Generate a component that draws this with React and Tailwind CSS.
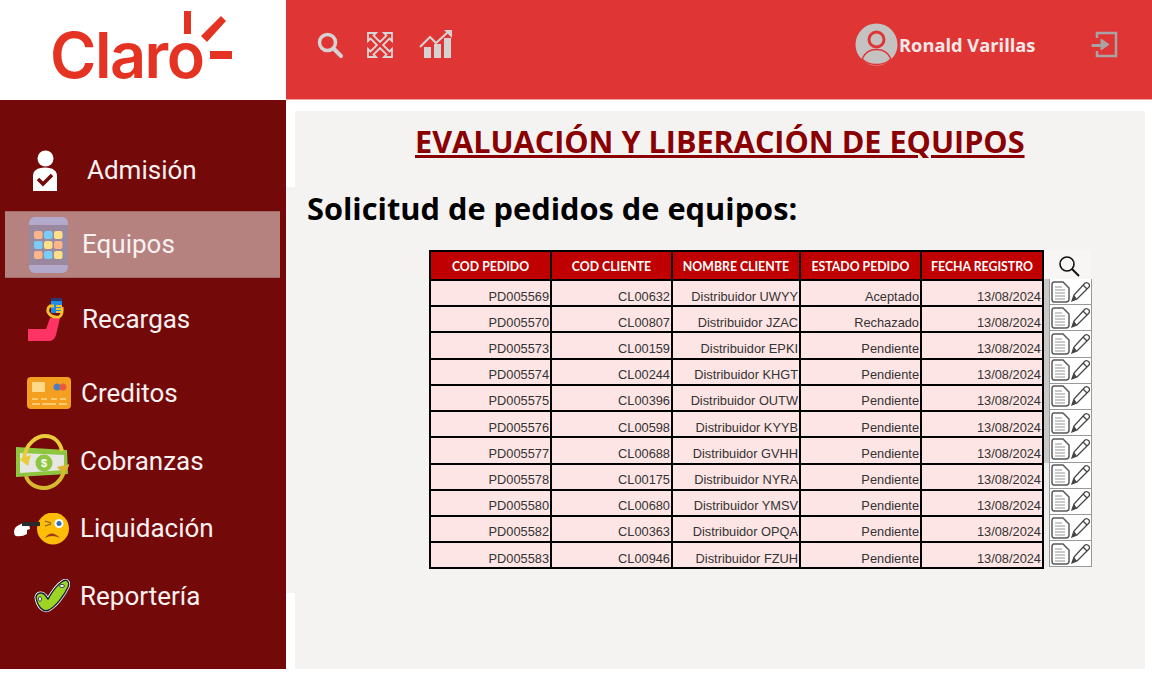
import React from 'react';

const rows = [
  ['PD005569','CL00632','Distribuidor UWYY','Aceptado'],
  ['PD005570','CL00807','Distribuidor JZAC','Rechazado'],
  ['PD005573','CL00159','Distribuidor EPKI','Pendiente'],
  ['PD005574','CL00244','Distribuidor KHGT','Pendiente'],
  ['PD005575','CL00396','Distribuidor OUTW','Pendiente'],
  ['PD005576','CL00598','Distribuidor KYYB','Pendiente'],
  ['PD005577','CL00688','Distribuidor GVHH','Pendiente'],
  ['PD005578','CL00175','Distribuidor NYRA','Pendiente'],
  ['PD005580','CL00680','Distribuidor YMSV','Pendiente'],
  ['PD005582','CL00363','Distribuidor OPQA','Pendiente'],
  ['PD005583','CL00946','Distribuidor FZUH','Pendiente'],
];
const heads = ['COD PEDIDO','COD CLIENTE','NOMBRE CLIENTE','ESTADO PEDIDO','FECHA REGISTRO'];
const widths = ['w-[119px]','w-[121px]','w-[128px]','w-[121px]','w-[122px]'];

const ClaroLogo = () => (
  <div className="relative w-[286px] h-[99px] bg-white shrink-0">
    <span className="absolute left-[50px] top-[20px] text-[#e53323] text-[63px] leading-[70px] font-semibold tracking-[-1.5px] font-['Inter',sans-serif]">Claro</span>
    <svg className="absolute left-0 top-0" width="286" height="99" viewBox="0 0 286 99">
      <rect x="184" y="11" width="7" height="23" fill="#e53323"/>
      <path d="M201 36 L221 16 L226 21 L207 42 Z" fill="#e53323"/>
      <rect x="210" y="51" width="22" height="8" fill="#e53323"/>
    </svg>
  </div>
);

const SearchTop = () => (
  <svg width="28" height="28" viewBox="0 0 28 28" fill="none" stroke="#d4d2d2">
    <circle cx="11.500" cy="11.500" r="8" strokeWidth="3.500"/>
    <path d="M17.500 17.500 L25 25" strokeWidth="4" strokeLinecap="round"/>
  </svg>
);
const Expand = () => (
  <svg width="28" height="28" viewBox="0 0 28 28" fill="none" stroke="#d8d6d6" strokeWidth="1.800">
    <path d="M2 2h8l-2.500 2.500 6.500 6.500 6.500-6.500L18 2h8v8l-2.500-2.500L17 14l6.500 6.500L26 18v8h-8l2.500-2.500L14 17l-6.500 6.500L10 26H2v-8l2.500 2.500L11 14 4.500 7.500 2 10z"/>
  </svg>
);
const ChartUp = () => (
  <svg width="34" height="30" viewBox="0 0 34 30">
    <path d="M1 17 L11 7 L17 13 L29 2" fill="none" stroke="#d4d2d2" strokeWidth="2"/>
    <path d="M25 0 H33 V8 Z" fill="#d4d2d2" />
    <rect x="5" y="17" width="7" height="11" fill="#d4d2d2"/>
    <rect x="15" y="14" width="7" height="14" fill="#d4d2d2"/>
    <rect x="25" y="8" width="7" height="20" fill="#d4d2d2"/>
  </svg>
);
const Avatar = () => (
  <svg width="43" height="43" viewBox="0 0 43 43">
    <circle cx="21.500" cy="21.500" r="21" fill="#c5c2c2"/>
    <circle cx="21.500" cy="16.500" r="7.500" fill="none" stroke="#e03535" strokeWidth="3"/>
    <path d="M7 36 C10 29 15 26.500 21.500 26.500 C28 26.500 33 29 36 36 C32 40 27 41.500 21.500 41.500 C16 41.500 11 40 7 36Z" fill="none" stroke="#e03535" strokeWidth="1.500"/>
  </svg>
);
const Logout = () => (
  <svg width="28" height="28" viewBox="0 0 28 28" fill="none">
    <path d="M6 7 V2 H25 V25 H6 V20" stroke="#a9a3a3" strokeWidth="2.500"/>
    <path d="M1 13.500 H10 V8 L18 13.500 L10 19 V15.500 H1 Z" fill="#a9a3a3" stroke="#a9a3a3" strokeWidth="1"/>
  </svg>
);

const IconPerson = () => (
  <svg width="26" height="42" viewBox="0 0 26 42">
    <circle cx="13.500" cy="8.500" r="8" fill="#fff"/>
    <path d="M1 41 V26 C1 21 5 17.500 13 17.500 C21 17.500 25 21 25 26 V41 Z" fill="#fff"/>
    <path d="M6 29 L11 34 L20 25" fill="none" stroke="#740909" strokeWidth="3.500"/>
  </svg>
);
const IconPhone = () => {
  const c = ['#fdb58a','#7acdf5','#fde08a','#7acdf5','#fde08a','#fdb58a','#fdb58a','#7acdf5','#fde08a'];
  return (
    <svg width="39" height="56" viewBox="0 0 39 56">
      <rect x="0" y="0" width="39" height="56" rx="6" fill="#b3aacb"/>
      <rect x="0" y="8" width="39" height="40" fill="#99889e"/>
      {c.map((f, i) => (
        <rect key={i} x={5 + (i % 3) * 10} y={14 + Math.floor(i / 3) * 10} width="8.500" height="8" rx="2" fill={f}/>
      ))}
    </svg>
  );
};
const IconArm = () => (
  <svg width="36" height="44" viewBox="0 0 36 44">
    <path d="M0 31 H18 L22 20 H32 L28 37 Q26 43 21 43 H0 Z" fill="#ff3364"/>
    <rect x="23" y="0" width="11" height="15" rx="1" fill="#1d8be8"/>
    <rect x="23" y="0" width="11" height="3" fill="#283a6e"/>
    <path d="M26 8 H22 Q19 10 20 14 Q23 20 31 19 Q35 17 34 9" fill="none" stroke="#f4c12c" strokeWidth="2.800"/>
    <path d="M28 8h6M28 11h6M28 14h6" stroke="#f4c12c" strokeWidth="1.800"/>
  </svg>
);
const IconCard = () => (
  <svg width="45" height="33" viewBox="0 0 45 33">
    <rect x="0" y="0" width="44" height="32" rx="4" fill="#f59f21"/>
    <rect x="5" y="5" width="13" height="10" rx="1" fill="#ffd98a"/>
    <circle cx="30" cy="10" r="3.500" fill="#4a7fc0"/>
    <circle cx="36" cy="10" r="3.500" fill="#ea5a3a"/>
    <path d="M5 22h6M14 22h6M24 22h6M33 22h6M5 27h8M15 27h14M32 27h8" stroke="#ffd98a" strokeWidth="1.600"/>
  </svg>
);
const IconMoney = () => (
  <svg width="54" height="56" viewBox="0 0 54 56">
    <path d="M1 13 L52 16 L53 40 L1 43 Z" fill="#8ec63f"/>
    <path d="M5 19 L49 21 L49 36 L5 39 Z" fill="#e6e6e2"/>
    <circle cx="29" cy="29" r="8.500" fill="#8ec63f"/>
    <text x="29" y="33" textAnchor="middle" fontSize="11" fontWeight="700" fill="#fff" fontFamily="Liberation Sans">$</text>
    <path d="M9 24 C11 9 22 2 30 2 C39 2 45 8 47 17" fill="none" stroke="#e8cc3c" strokeWidth="4"/>
    <path d="M50 33 C48 47 38 54 29 54 C20 54 13 49 11 42" fill="none" stroke="#d8b730" strokeWidth="4"/>
    <path d="M4 25 L16 21 L13 32 Z" fill="#e8cc3c"/>
    <path d="M42 33 L55 30 L49 41 Z" fill="#d8b730"/>
  </svg>
);
const IconWorried = () => (
  <svg width="58" height="32" viewBox="0 0 58 32">
    <circle cx="40" cy="15.500" r="16" fill="#fdbd08"/>
    <path d="M1 19 Q1 14 6 12 L10 10 L16 11 L17 16 L14 17 L14 21 Q9 24 3 23 Q1 22 1 19Z" fill="#fff"/>
    <rect x="9" y="9" width="18" height="4" fill="#2b2b2b"/>
    <circle cx="46" cy="10.500" r="4.500" fill="#fff"/>
    <circle cx="46" cy="10.500" r="2.500" fill="#2b6fb5"/>
    <path d="M32 8 L38 10 M32 13 L38 11" stroke="#805a10" strokeWidth="1.200"/>
    <path d="M32 25 Q38 16 47 25 Q39 21 32 25Z" fill="#a33a1a"/>
  </svg>
);
const IconCheck = () => (
  <svg width="36" height="35" viewBox="0 0 36 35">
    <path d="M2 18 C3 13 9 13 11 16 L14 20 C18 13 24 5 29 2 C33 0 36 3 34 8 C30 17 22 27 15 31 C9 34 3 27 2 18 Z" fill="#9ed524" stroke="#fff" strokeWidth="3"/>
    <path d="M2 18 C3 13 9 13 11 16 L14 20 C18 13 24 5 29 2 C33 0 36 3 34 8 C30 17 22 27 15 31 C9 34 3 27 2 18 Z" fill="#9ed524" stroke="#10203a" strokeWidth="1.400"/>
    <ellipse cx="6" cy="20" rx="1.500" ry="2.300" fill="#fff" stroke="#10203a" strokeWidth="0.800"/>
    <ellipse cx="28" cy="7" rx="2.500" ry="1.500" fill="#fff" stroke="#10203a" strokeWidth="0.800"/>
  </svg>
);

const nav = [
  { label: 'Admisión', icon: <IconPerson />, iconBox: 'w-[87px] pl-[32px]', mt: '' },
  { label: 'Equipos', icon: <IconPhone />, iconBox: 'w-[77px] pl-[29px]', mt: 'mt-[7px]', active: true },
  { label: 'Recargas', icon: <IconArm />, iconBox: 'w-[82px] pl-[28px]', mt: 'mt-[8px]' },
  { label: 'Creditos', icon: <IconCard />, iconBox: 'w-[81px] pl-[27px]', mt: 'mt-[7px]' },
  { label: 'Cobranzas', icon: <IconMoney />, iconBox: 'w-[80px] pl-[15px]', mt: 'mt-px' },
  { label: 'Liquidación', icon: <IconWorried />, iconBox: 'w-[80px] pl-[13px]', mt: '' },
  { label: 'Reportería', icon: <IconCheck />, iconBox: 'w-[80px] pl-[34px]', mt: 'mt-px' },
];

const DocPencil = () => (
  <svg width="40" height="22" viewBox="0 0 40 22" fill="none">
    <path d="M3 1 H12 L18 7 V18 Q18 21 15 21 H3 Q1 21 1 18 V4 Q1 1 3 1Z" stroke="#5a5a5a" strokeWidth="1.500"/>
    <path d="M4 6h7M4 9h10M4 12h10M4 15h10M4 18h10" stroke="#8a8a8a" strokeWidth="0.900"/>
    <path d="M21 20 L23 14 L34 2 Q36 1 38 3 Q39 5 38 6 L26 18 Z" stroke="#444" strokeWidth="1.300"/>
    <path d="M32 4 L36 8" stroke="#444" strokeWidth="1.300"/>
    <path d="M21 20 L23 14 L26 18 Z" fill="#444"/>
  </svg>
);

export default function App() {
  return (
    <div className="w-[1152px] h-[676px] bg-white overflow-hidden flex flex-col">
      <header className="flex h-[99px] shrink-0">
        <ClaroLogo />
        <div className="flex-1 bg-[#e03535] flex items-center pb-[10px]">
          <div className="ml-[30px] flex items-center"><SearchTop /></div>
          <div className="ml-[22px] flex items-center"><Expand /></div>
          <div className="ml-[25px] flex items-center"><ChartUp /></div>
          <div className="ml-[402px] flex items-center"><Avatar /></div>
          <span className="ml-px text-[18.3px] font-bold text-[#f1e8e8] font-['Open_Sans',sans-serif]">Ronald Varillas</span>
          <div className="ml-[56px] flex items-center"><Logout /></div>
        </div>
      </header>
      <div className="h-px bg-[#f0a0a0] ml-[286px] shrink-0" />
      <div className="flex h-[569px] shrink-0">
        <aside className="w-[286px] bg-[#740909] pt-[37px] shrink-0 flex flex-col">
          {nav.map((n) => (
            <div key={n.label} className={`h-[67px] flex items-center shrink-0 ${n.mt} ${n.active ? 'bg-[#b58280] ml-[5px] mr-[6px] border-y border-[#a76a6a]' : ''}`}>
              <div className={`${n.iconBox} shrink-0 flex items-center ${n.active ? '-ml-[5px]' : ''}`}>{n.icon}</div>
              <span className={`text-[26px] text-[#f8f1f1] font-['Roboto',sans-serif] ${n.active ? 'ml-[5px]' : ''}`}>{n.label}</span>
            </div>
          ))}
        </aside>
        <div className="w-[9px] shrink-0 flex flex-col bg-white">
          <div className="h-[87px] bg-white" />
          <div className="h-[406px] bg-[#f4f3f2]" />
        </div>
        <main className="w-[850px] mt-[11px] bg-[#f4f3f2] flex flex-col shrink-0">
          <h1 className="mt-[10px] pl-[120px] text-[30.600px] leading-[40px] font-bold text-[#8a0000] underline font-['Open_Sans',sans-serif]">EVALUACIÓN Y LIBERACIÓN DE EQUIPOS</h1>
          <h2 className="mt-[26px] pl-[12px] text-[30.750px] leading-[42px] font-bold text-black font-['Open_Sans',sans-serif]">Solicitud de pedidos de equipos:</h2>
          <div className="mt-[21px] ml-[134px] flex">
            <div className="flex flex-col">
              <div className="flex h-[29px] bg-black border-2 border-b-0 border-black">
                {heads.map((h, i) => (
                  <div key={h} className={`${widths[i]} ${i === 0 ? '' : 'border-l-2 border-black'} bg-[#c00000] flex items-center justify-center pt-[3px] text-white text-[12.300px] font-bold font-['Lato',sans-serif]`}>{h}</div>
                ))}
              </div>
              {rows.map((r) => (
                <div key={r[0]} className="flex h-[26.220px] border-2 border-b-0 last:h-[28.220px] last:border-b-2 border-black">
                  {[r[0], r[1], r[2], r[3], '13/08/2024'].map((c, i) => (
                    <div key={i} className={`${widths[i]} ${i === 0 ? '' : 'border-l-2 border-black'} bg-[#fee5e5] flex items-center justify-end pr-px pt-[6px] text-[12.800px] text-[#333] font-['Liberation_Sans',sans-serif]`}>{c}</div>
                  ))}
                </div>
              ))}
            </div>
            <div className="flex flex-col w-[47px]">
              <div className="h-[29px] pl-[2px] pt-[2px] bg-[#f7f6f5] flex items-center justify-center">
                <svg width="24" height="22" viewBox="0 0 24 22" fill="none" stroke="#111">
                  <circle cx="10" cy="9" r="7" strokeWidth="1.600"/>
                  <path d="M15 14 L22 21" strokeWidth="2"/>
                </svg>
              </div>
              {rows.map((r, i) => (
                <div key={r[0]} className="flex h-[26.220px]">
                  <div className={`w-[5px] shrink-0 ${i < 7 ? 'bg-[#c8c8c8]' : 'bg-[#eeeeee]'}`} />
                  <div className="flex-1 bg-white border border-t-0 border-[#999] flex items-center pl-px">
                    <DocPencil />
                  </div>
                </div>
              ))}
            </div>
          </div>
        </main>
      </div>
    </div>
  );
}
